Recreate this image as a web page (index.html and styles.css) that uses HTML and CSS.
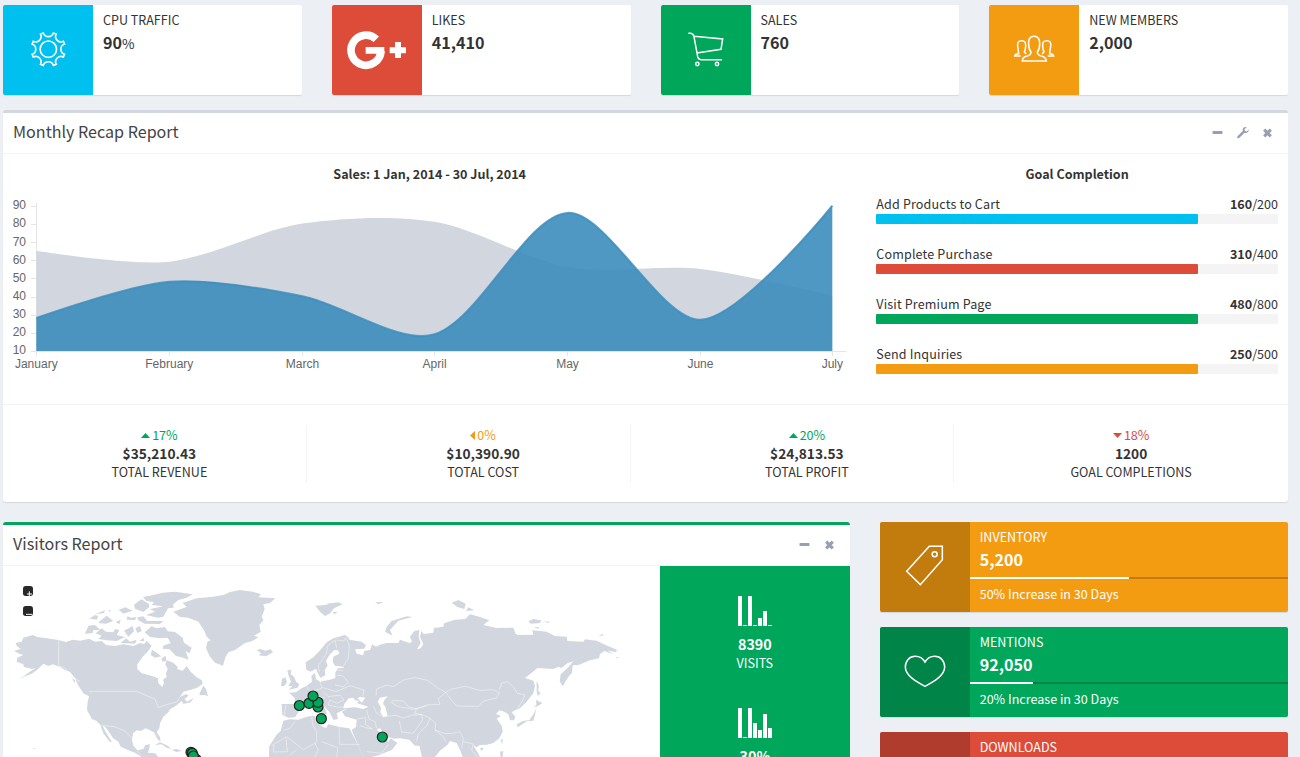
FILE: index.html
```html
<!DOCTYPE html>
<html lang="en">
<head>
<meta charset="utf-8">
<title>Dashboard</title>
<link rel="stylesheet" href="styles.css">
</head>
<body>
<main class="content">
  <section class="info-row">
    <div class="info-box">
      <svg class="tile aqua" viewBox="9 15 270 270"><g transform="translate(145 147.500) scale(3)" stroke-width="1.600"><circle r="8.200"/><path d="M-5.100-16.200A5.400 5.400 0 0 0 5.100-16.200L7.850-15.100A5.400 5.400 0 0 0 15.100-7.850L16.200-5.100A5.400 5.400 0 0 0 16.200 5.100L15.100 7.850A5.400 5.400 0 0 0 7.850 15.100L5.100 16.200A5.400 5.400 0 0 0-5.100 16.200L-7.850 15.100A5.400 5.400 0 0 0-15.100 7.850L-16.200 5.100A5.400 5.400 0 0 0-16.200-5.100L-15.100-7.850A5.400 5.400 0 0 0-7.850-15.100Z"/></g></svg>
      <div class="info-text"><span>CPU TRAFFIC</span><b>90<small>%</small></b></div>
    </div>
    <div class="info-box">
      <svg class="tile red" viewBox="21 15 270 270"><path d="M154 118A45 45 0 1 0 168 153" stroke-width="23"/><path class="solid" d="M122 141H178V161H122ZM210 126H228V142H243V160H228V174H210V160H194V142H210Z"/></svg>
      <div class="info-text"><span>LIKES</span><b>41,410</b></div>
    </div>
    <div class="info-box">
      <svg class="tile green" viewBox="33 15 270 270"><path d="M115 100H122Q130 101 132 110L143 170Q145 179 153 179H216M132 109L218 117L213 148L140 159"/><circle cx="142" cy="192" r="5"/><circle cx="201" cy="192" r="5"/></svg>
      <div class="info-text"><span>SALES</span><b>760</b></div>
    </div>
    <div class="info-box">
      <svg class="tile orange" viewBox="57 15 270 270"><path d="M157 183H229Q228 172 216 169Q202 166 202 156Q209 148 209 132Q210 109 192 109Q174 109 176 132Q176 148 183 156Q183 166 169 169Q157 172 157 183ZM152 168H134Q135 161 146 161Q145 151 143 139Q141 121 155 122Q168 121 167 139Q166 151 163 156L169 162M233 168H251Q250 161 239 161Q240 151 242 139Q244 121 230 122Q217 121 218 139Q219 151 222 156L216 162"/></svg>
      <div class="info-text"><span>NEW MEMBERS</span><b>2,000</b></div>
    </div>
  </section>

  <section class="box recap">
    <header class="box-header">
      <h3>Monthly Recap Report</h3>
      <div class="tools">
        <svg viewBox="0 0 25 20"><rect x="7.500" y="8" width="10" height="3" rx=".7"/></svg>
        <svg viewBox="0 0 25 20"><path d="M7.500 13.200L12.800 8C12.100 5.300 14.200 3.700 16.600 4.200L14.500 6.200L15 8L16.800 8.400L18.700 6.500C19 9 17 10.700 14.300 9.900L9.200 15C8 15.900 6.600 14.600 7.500 13.200Z"/></svg>
        <svg viewBox="0 0 25 20"><path class="cross" d="M9.200 6.700L15.800 13.300M15.800 6.700L9.200 13.300"/></svg>
      </div>
    </header>
    <div class="recap-body">
      <div class="chart-col">
        <p class="caption">Sales: 1 Jan, 2014 - 30 Jul, 2014</p>
        <svg class="chart" viewBox="13 195 833 180">
          <path class="axis" d="M36.500 203V356M31 351.500H846M31 206.500H36M31 224.500H36M31 242.500H36M31 260.500H36M31 278.500H36M31 297.500H36M31 315.500H36M31 333.500H36M169.500 351V356M302.500 351V356M434.500 351V356M567.500 351V356M700.500 351V356M832.500 351V356"/>
          <path fill="#d2d6de" d="M36.300 250.800C36.300 250.800 129 265.800 169.200 261.700C209 257.600 262.500 229.600 302.400 223.600C342 217.600 395 215.300 434.600 221.800C474.500 228.300 527.500 260 567.500 267.100C607.500 274.200 660.500 264.600 700.400 268.900C740 273.300 832.300 295.600 832.300 295.600V351H36.300Z"/>
          <path fill="#3c8dbc" fill-opacity=".9" d="M36.300 318C36.300 318 128.800 285 169.200 281.700C208.600 278.500 263.100 288.400 302.400 296.200C342.800 304.200 400.100 345.100 434.600 334.300C479.700 320.100 526.600 215.100 567.500 212.900C606.300 210.800 661.200 320.900 700.400 319.800C740.600 318.700 832.300 205.600 832.300 205.600V351H36.300Z"/>
          <path class="curve" d="M36.300 318C36.300 318 128.800 285 169.200 281.700C208.600 278.500 263.100 288.400 302.400 296.200C342.800 304.200 400.100 345.100 434.600 334.300C479.700 320.100 526.600 215.100 567.500 212.900C606.300 210.800 661.200 320.900 700.400 319.800C740.600 318.700 832.300 205.600 832.300 205.600"/>
          <g text-anchor="end"><text x="26" y="209">90</text><text x="26" y="227">80</text><text x="26" y="246">70</text><text x="26" y="264">60</text><text x="26" y="282">50</text><text x="26" y="300">40</text><text x="26" y="318">30</text><text x="26" y="336">20</text><text x="26" y="354">10</text></g>
          <g text-anchor="middle"><text x="36.300" y="368">January</text><text x="169.300" y="368">February</text><text x="302.400" y="368">March</text><text x="434.600" y="368">April</text><text x="567.500" y="368">May</text><text x="700.400" y="368">June</text><text x="832.300" y="368">July</text></g>
        </svg>
      </div>
      <div class="goals">
        <p class="caption">Goal Completion</p>
        <div class="goal"><div><span class="name">Add Products to Cart</span><span><b>160</b>/200</span></div><div class="track"><i class="aqua"></i></div></div>
        <div class="goal"><div><span class="name">Complete Purchase</span><span><b>310</b>/400</span></div><div class="track"><i class="red"></i></div></div>
        <div class="goal"><div><span class="name">Visit Premium Page</span><span><b>480</b>/800</span></div><div class="track"><i class="green"></i></div></div>
        <div class="goal"><div><span class="name">Send Inquiries</span><span><b>250</b>/500</span></div><div class="track"><i class="orange"></i></div></div>
      </div>
    </div>
    <footer class="stats">
      <div class="stat"><span class="up"><svg viewBox="0 0 9 5"><path d="M0 5L4.500 0L9 5Z"/></svg>17%</span><b>$35,210.43</b><span>TOTAL REVENUE</span></div>
      <div class="stat"><span class="flat"><svg class="side" viewBox="0 0 5 9"><path d="M5 0V9L0 4.500Z"/></svg>0%</span><b>$10,390.90</b><span>TOTAL COST</span></div>
      <div class="stat"><span class="up"><svg viewBox="0 0 9 5"><path d="M0 5L4.500 0L9 5Z"/></svg>20%</span><b>$24,813.53</b><span>TOTAL PROFIT</span></div>
      <div class="stat"><span class="down"><svg viewBox="0 0 9 5"><path d="M0 0H9L4.500 5Z"/></svg>18%</span><b>1200</b><span>GOAL COMPLETIONS</span></div>
    </footer>
  </section>

  <section class="lower">
    <div class="box visitors">
      <header class="box-header">
        <h3>Visitors Report</h3>
        <div class="tools">
          <svg viewBox="0 0 25 20"><rect x="7.500" y="8" width="10" height="3" rx=".7"/></svg>
          <svg viewBox="0 0 25 20"><path class="cross" d="M9.200 6.700L15.800 13.300M15.800 6.700L9.200 13.300"/></svg>
        </div>
      </header>
      <div class="visitors-body">
        <svg class="map" viewBox="9 153 1971 573">
          <g class="land">
            <!-- North America -->
            <path d="M42 408L62 401L50 392L47 384L65 380L70 368L98 360L112 366L140 370L175 375L198 381L218 374L240 377L268 371L285 380L305 378L318 390L345 393L370 388L400 393L420 384L432 388L440 378L455 392L443 410L428 425L412 448L412 462L425 475L445 480L465 486L474 490L475 505L487 516L492 503L489 494L500 486L498 474L503 462L496 448L500 436L520 443L533 456L532 463L548 467L560 453L572 470L590 487L606 496L608 507L590 519L570 525L550 530L540 546L558 537L566 542L553 552L562 560L582 548L572 562L550 567L545 558L528 572L510 583L505 592L490 605L480 625L478 640L470 652L480 667L482 680L472 672L462 652L450 646L437 640L423 648L410 646L399 655L396 675L400 692L412 706L430 702L436 690L450 688L447 704L443 713L466 715L474 726H425L405 713L385 706L362 695L355 680L338 668L325 648L315 635L308 633L317 650L335 680L330 682L310 655L301 630L290 618L276 612L268 598L261 585L263 560L267 544L250 535L234 510L226 491L210 471L196 466L180 456L158 448L145 453L130 446L112 464L95 476L75 484L58 493L84 474L108 458L97 462L72 456L70 448L50 440L52 428L70 420L58 416Z"/>
            <!-- Arctic islands and Greenland -->
            <path d="M255 357L265 332L285 330L300 344L280 346L278 354ZM287 355L305 340L318 350L340 352L345 342L358 345L350 360L375 366L350 378L320 376L295 372L305 362ZM268 311L285 300L295 303L290 314ZM300 318L320 302L340 318L318 326L295 324ZM285 298L315 286L312 294ZM330 292L325 284L332 286ZM347 321L362 314L358 328ZM356 284L376 277L398 287L370 296ZM380 314L382 304L393 308L410 306L405 315ZM402 269L424 253L446 266L448 276L430 291L405 281ZM415 316L412 307L430 304L442 318L490 318L480 327L434 326ZM429 246L450 242L488 233L525 230L578 238L560 248L535 255L520 268L520 278L504 280L490 305L475 308L438 300L465 290L450 282L490 274L455 270L462 262L438 257ZM372 347L398 333L402 349L385 365ZM406 340L420 333L425 348L412 354ZM362 384L378 370L390 380L410 374L405 386ZM419 378L430 368L433 378ZM434 352L455 334L470 340L495 336L503 349L525 351L548 368L552 383L575 398L568 415L557 408L566 434L545 427L528 423L508 403L488 401L490 392L512 384L503 368L482 370L450 366ZM452 420L456 404L470 413L484 424L465 428ZM485 430L497 422L499 438L487 440ZM598 537L610 512L618 522L624 543L614 540L600 541ZM520 290L560 276L548 264L590 250L640 245L670 240L690 231L720 225L758 230L783 238L775 247L826 250L810 264L790 268L794 282L785 305L790 316L778 330L782 350L762 362L775 367L755 379L735 384L705 405L685 412L675 430L669 452L645 443L630 425L618 400L622 380L632 376L620 365L612 345L595 320L565 308L540 306ZM770 405L782 402L795 407L812 403L819 412L798 424L776 421L784 415ZM465 690L480 682L500 691L515 701L500 698L485 688ZM516 706L528 701L545 707L530 711Z"/>
            <!-- Western islands -->
            <path d="M862 466L874 464L872 478L882 485L889 502L898 506L893 518L866 524L877 514L865 512L873 499L866 483ZM846 491L856 487L861 501L854 512L843 514ZM946 272L975 270L990 266L1005 276L990 295L975 303L960 290ZM980 266L1015 262L1028 268L1005 278ZM998 290L1013 292L1002 298ZM1126 262L1150 261L1135 268Z"/>
            <!-- Eurasia -->
            <path d="M845 567L885 567L884 550L868 533L887 532L905 520L920 512L936 500L934 482L945 474L948 493L960 500L990 494L1006 489L1006 472L1014 460L1033 458L1030 455L1005 452L998 440L1000 425L1018 416L1014 406L1003 405L988 420L978 437L983 452L974 465L976 480L962 489L955 478L948 461L932 470L919 464L917 442L940 427L958 409L980 382L1000 370L1035 360L1045 367L1048 374L1085 380L1098 390L1093 401L1065 403L1070 416L1090 421L1092 408L1110 405L1117 388L1128 395L1140 389L1160 384L1195 384L1200 374L1228 384L1236 381L1230 365L1243 348L1258 345L1256 365L1262 385L1251 403L1262 400L1270 387L1260 366L1264 348L1271 357L1300 353L1302 339L1330 335L1332 325L1365 314L1395 312L1410 298L1440 306L1468 316L1450 330L1490 339L1540 338L1547 357L1555 360L1600 359L1597 346L1640 350L1665 363L1700 365L1702 378L1750 380L1755 373L1790 377L1825 394L1851 404L1848 412L1823 406L1840 418L1813 408L1800 417L1797 430L1770 436L1735 450L1718 451L1716 473L1705 485L1688 514L1679 499L1682 478L1705 457L1722 436L1716 440L1702 445L1684 459L1675 455L1660 462L1613 459L1575 489L1600 497L1605 513L1600 535L1580 560L1560 580L1542 587L1535 592L1546 605L1542 616L1530 616L1525 598L1513 590L1498 586L1488 597L1503 603L1490 611L1505 632L1508 650L1498 670L1480 684L1460 689L1440 690L1430 697L1420 690L1440 726H1388L1378 700L1370 684L1350 678L1342 690L1320 707L1305 726H1266L1258 692L1245 692L1228 674L1200 670L1182 671L1158 664L1140 640L1130 643L1148 665L1165 680L1172 670L1192 684L1176 704L1140 719L1115 726H1090L1078 700L1055 645L1068 636L1070 614L1035 604L1026 590L1040 582L1045 561L1060 548L1075 551L1085 563L1095 550L1080 545L1060 558L1042 580L1010 595L1014 612L1000 614L990 594L970 570L960 559L975 582L981 597L963 602L964 588L940 567L915 577L898 587L885 607L865 608L847 600Z"/>
            <path d="M870 613L895 614L925 604L945 603L948 620L968 635L978 640L985 628L1020 636L1048 640L1066 674L1090 726H807L808 694L829 660L842 648L850 617Z"/>
            <path d="M970 604L981 601L978 610ZM1155 350L1160 335L1175 318L1220 304L1237 306L1195 317L1170 345L1178 362ZM1355 263L1375 255L1397 266L1393 282L1372 276ZM1398 288L1405 277L1423 286ZM1585 319L1600 312L1623 316L1621 324L1592 326ZM1630 319L1650 320L1645 324ZM1600 337L1617 336L1615 341ZM1795 361L1812 357L1807 363ZM1847 426L1859 428L1850 430ZM1610 498L1616 511L1615 528L1622 535L1613 543L1610 530ZM1600 577L1609 570L1608 555L1627 564L1613 574ZM1550 628L1570 617L1588 616L1605 590L1610 577L1605 600L1600 617L1580 619L1553 637ZM1502 675L1509 671L1506 688ZM1440 699L1452 698L1444 708ZM1500 710L1510 708L1508 726H1502ZM99 699H106L102 703ZM216 490L225 496L224 505Z"/>
          </g>
          <g class="water">
            <path d="M1033 567L1046 550L1060 548L1065 556L1078 558L1070 564L1105 575L1090 582L1065 577L1030 580ZM1075 552L1096 545L1088 553ZM1133 560L1140 548L1163 544L1153 556L1149 566L1156 575L1160 590L1163 603L1150 606L1141 592L1143 578Z"/>
          </g>
          <g class="borders">
            <path d="M176 374V452L196 460L225 490L240 500M267 529H410L440 542L465 553L475 578L495 570L530 561L541 545M301 631L343 635L375 648L397 671M412 708L420 720M958 470L955 450L980 415L982 394L1005 375L1010 400M1010 375L1032 378L1037 368L1048 390L1045 430L1030 452M1006 465L1030 467M1010 480L1030 483L1045 502L1030 515L1005 510M960 498L965 520L930 530L920 515M966 517L1008 530L1050 512L1092 525L1088 545M970 530L985 545L1020 540L1032 555L1010 565L990 555L985 570L1015 577L1040 575M960 545L975 550M885 567L905 575M857 570L853 602M1128 542L1130 522L1160 510L1180 515L1210 495L1245 488L1283 496L1310 517L1337 532L1315 551L1320 568L1280 570L1250 582L1225 575L1210 558L1175 557M1337 532L1355 522L1395 514L1440 526L1480 524L1498 533L1490 549L1450 558L1435 574L1370 573L1350 550L1337 532M1498 524L1505 504L1522 500L1540 515L1552 535L1575 539L1567 558L1553 580M1120 574L1130 595L1150 605L1185 601L1210 609L1238 600L1265 599L1268 615L1250 640L1240 655L1205 651L1198 618M1170 560L1195 575L1240 583L1280 573M1250 582L1243 594L1270 600L1290 609L1280 633L1255 655L1250 680M1100 585L1107 612L1125 620L1130 640M1071 612L1098 608L1096 628L1117 642L1098 638L1080 632M1100 710L1145 715L1165 688M1290 610L1308 625L1305 645L1335 656L1357 655L1380 650L1390 670L1385 700M1305 645L1330 665L1338 680M1390 680L1420 687L1415 705L1432 726M850 647L870 640L885 620M935 606L938 630L950 650V682L910 704L860 665L815 692M858 667L862 710L820 711L822 691M945 685L955 705L945 726M1018 636V688H1080M965 680L1013 698L1010 726M890 705L870 719"/>
          </g>
          <g class="pins"><circle cx="898" cy="571.500" r="15"/><circle cx="927" cy="565" r="15"/><circle cx="954" cy="576" r="15"/><circle cx="954" cy="562" r="15"/><circle cx="939" cy="543" r="15"/><circle cx="964" cy="611" r="15"/><circle cx="1147" cy="666" r="15"/><circle cx="573" cy="712" r="15"/><circle cx="577" cy="715" r="15"/><circle cx="588" cy="733" r="15"/><circle cx="580" cy="723" r="15"/></g>
          <g><rect x="69" y="213" width="30" height="30" rx="8" fill="#292929"/><rect x="69" y="273" width="30" height="30" rx="8" fill="#292929"/><path d="M81 237H96M88 229V243M78 298H97" stroke="#fff" stroke-width="3"/></g>
        </svg>
        <aside class="pane">
          <svg viewBox="0 0 34 30"><path d="M0 0H4V30H0ZM5 29H9V30H5ZM10 0H14V30H10ZM15 29H19V30H15ZM20 22H24V30H20ZM25 15H29V30H25ZM30 29H34V30H30Z"/></svg>
          <b>8390</b><span>VISITS</span>
          <svg viewBox="0 0 34 30"><path d="M0 0H4V30H0ZM5 29H9V30H5ZM10 0H14V30H10ZM15 15H19V30H15ZM20 22H24V30H20ZM25 6H29V30H25ZM30 20H34V30H30Z"/></svg>
          <b>30%</b>
        </aside>
      </div>
    </div>
    <div class="metrics">
      <div class="metric orange">
        <svg class="tile shade" viewBox="30 21 270 270"><path d="M110 169L178 94H217V134L151 209Z"/><circle cx="194" cy="118" r="7.500"/></svg>
        <div class="metric-text"><span>INVENTORY</span><b>5,200</b><div class="meter"><i style="width:50%"></i></div><span>50% Increase in 30 Days</span></div>
      </div>
      <div class="metric green">
        <svg class="tile shade" viewBox="30 336 270 270"><path d="M165 441C159 431 148 424 136 424C118 424 106 438 106 456C106 483 143 502 165 514C187 502 224 483 224 456C224 438 212 424 194 424C182 424 171 431 165 441Z"/></svg>
        <div class="metric-text"><span>MENTIONS</span><b>92,050</b><div class="meter"><i style="width:20%"></i></div><span>20% Increase in 30 Days</span></div>
      </div>
      <div class="metric red">
        <svg class="tile shade" viewBox="0 0 270 270"></svg>
        <div class="metric-text"><span>DOWNLOADS</span></div>
      </div>
    </div>
  </section>
</main>
</body>
</html>
```

FILE: styles.css
```css
* { box-sizing: border-box; }
html, body { height: 757px; overflow: hidden; }
body {
  margin: 0;
  background: #ecf0f5;
  color: #333;
  font: 12.55px/20px "Noto Sans CJK SC", "Noto Sans", sans-serif;
}
svg { display: block; flex: none; }
b { font-weight: 700; }
.content { height: 757px; overflow: hidden; padding: 5px 12px 0 3px; }

.aqua { background: #00c0ef; }
.red { background: #dd4b39; }
.green { background: #00a65a; }
.orange { background: #f39c12; }

.tile { width: 90px; height: 90px; border-radius: 2px 0 0 2px; fill: none; stroke: #fff; stroke-width: 4.6; }
.tile .solid { fill: #fff; stroke: none; }
.shade { background: rgba(0, 0, 0, .2); }

.info-row { display: grid; grid-template-columns: repeat(4, 1fr); gap: 30px; margin-bottom: 15px; }
.info-box { display: flex; height: 90px; background: #fff; border-radius: 2px; box-shadow: 0 1px 1px rgba(0, 0, 0, .1); }
.info-text { display: flex; flex-direction: column; padding: 5px 10px; }
.info-text b { font-size: 16.1px; line-height: 24px; }
.info-text small { font-size: 13.6px; font-weight: 400; }

.box { background: #fff; border-top: 3px solid #d2d6de; border-radius: 3px; box-shadow: 0 1px 1px rgba(0, 0, 0, .1); }
.box-header { display: flex; justify-content: space-between; height: 41px; padding: 10px 8.5px 0 10px; border-bottom: 1px solid #f4f4f4; }
.box-header h3 { margin: 0; color: #444; font-size: 16.1px; font-weight: 400; line-height: 16px; }
.tools { display: flex; fill: #97a0b3; }
.tools svg { width: 25px; height: 20px; }
.cross { stroke: #97a0b3; stroke-width: 3.2; }

.recap { height: 392px; margin-bottom: 20px; }
.recap-body { display: grid; grid-template-columns: 833.3px 1fr; gap: 30px; height: 251px; padding: 10px; border-bottom: 1px solid #f4f4f4; }
.caption { margin: 0 0 10px; text-align: center; font-weight: 700; }
.chart { width: 833px; height: 180px; margin-top: 11px; }
.chart-col .caption { margin: 0; }
.chart text { fill: #666; font: 12px "Liberation Sans", Arial, sans-serif; }
.axis { fill: none; stroke: #e5e5e5; }
.curve { fill: none; stroke: #3c8dbc; stroke-opacity: .8; stroke-width: 2; }
.goal { height: 50px; }
.goal > div:first-child { display: flex; justify-content: space-between; }
.goal .name { letter-spacing: .15px; }
.track { height: 10px; background: #f4f4f4; }
.track i { display: block; width: 80%; height: 10px; border-radius: 1px; }

.stats { display: grid; grid-template-columns: repeat(4, 1fr); height: 98px; padding: 20px 0; margin: 0 -5px; }
.stat { display: flex; flex-direction: column; align-items: center; height: 58px; margin: 0 15px; padding-top: 1px; border-right: 1px solid #f4f4f4; line-height: 18.5px; }
.stat:last-child { border-right: 0; }
.stat b { margin: -1px 0 1px; font-size: 13.7px; }
.stat span { display: flex; align-items: center; }
.stat svg { width: 9px; height: 5px; margin-right: 2px; fill: currentColor; }
.stat .side { width: 5px; height: 9px; }
.up { color: #00a65a; }
.flat { color: #f39c12; }
.down { color: #dd4b39; }

.lower { display: grid; grid-template-columns: 846.7px 1fr; gap: 30px; }
.visitors { height: 372px; border-top-color: #00a65a; }
.visitors .box-header { padding-right: 7.7px; }
.visitors-body { display: flex; }
.map { width: 657px; height: 191px; }
.land { fill: #d2d6de; }
.water { fill: #fff; }
.borders { fill: none; stroke: #fff; stroke-opacity: .65; stroke-width: 2; stroke-linejoin: round; }
.pins { fill: #00a65a; stroke: #222; stroke-width: 3.6; }
.pane { display: flex; flex-direction: column; align-items: center; flex: 1; height: 328px; padding-top: 30px; background: #00a65a; color: #fff; line-height: 18px; }
.pane svg { width: 34px; height: 30px; margin-bottom: 9px; fill: #fff; }
.pane b { font-size: 14.3px; }
.pane span { margin: 1px 0 36px; }

.metrics { display: flex; flex-direction: column; gap: 15px; }
.metric { display: flex; height: 90px; border-radius: 2px; color: #fff; box-shadow: 0 1px 1px rgba(0, 0, 0, .1); }
.metric-text { display: flex; flex: 1; flex-direction: column; padding-top: 5px; }
.metric-text span { padding: 0 10px; }
.metric-text b { padding: 0 10px; font-size: 16.1px; line-height: 24px; }
.meter { height: 2px; margin: 6px 0 5px; background: rgba(0, 0, 0, .2); }
.meter i { display: block; height: 2px; background: #fff; }
```
